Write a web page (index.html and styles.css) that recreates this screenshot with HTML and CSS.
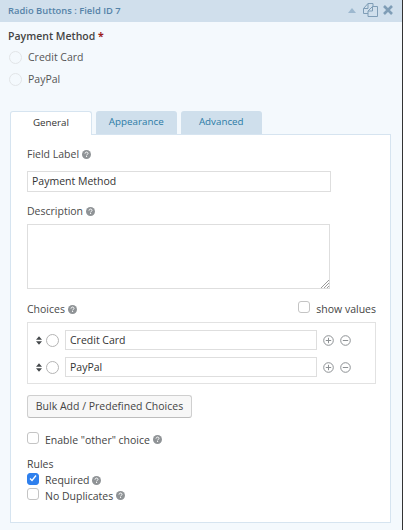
FILE: index.html
```html
<!DOCTYPE html>
<html lang="en">
<head>
    <meta charset="UTF-8">
    <meta name="viewport" content="width=device-width, initial-scale=1.0">
    <title>Radio Buttons</title>
    <link rel="stylesheet" href="styles.css">
</head>
<body>
    <svg class="sprites" width="0" height="0">
        <symbol id="help" viewBox="0 0 9 9">
            <circle cx="4.5" cy="4.5" r="4.5" fill="#8f9396"/>
            <path d="M3 3.6c0-2 3-2 3-.2 0 1-1.400 1-1.400 2" fill="none" stroke="#fff" stroke-width="1"/>
            <rect x="4.100" y="6" width="1" height="1" fill="#fff"/>
        </symbol>
        <symbol id="plus" viewBox="0 0 11 11">
            <circle cx="5.500" cy="5.500" r="4.800" fill="none" stroke="#8d9194" stroke-width="1"/>
            <path d="M2.800 5.500h5.400M5.500 2.800v5.400" stroke="#8d9194" stroke-width="1"/>
        </symbol>
        <symbol id="minus" viewBox="0 0 11 11">
            <circle cx="5.500" cy="5.500" r="4.800" fill="none" stroke="#8d9194" stroke-width="1"/>
            <path d="M2.800 5.500h5.400" stroke="#8d9194" stroke-width="1"/>
        </symbol>
        <symbol id="sort" viewBox="0 0 7 10">
            <path d="M3.500 0L7 4H0zM3.500 10L0 6h7z" fill="#44484b"/>
        </symbol>
    </svg>

    <div class="field-bar">
        <span class="field-title">Radio Buttons : Field ID 7</span>
        <div class="bar-icons">
            <svg class="collapse" width="8" height="5" viewBox="0 0 8 5"><path d="M4 0l4 5H0z" fill="#9db8cf"/></svg>
            <svg width="15" height="14" viewBox="0 0 15 14" fill="none" stroke="#7f9db6" stroke-width="1">
                <path d="M5 10.500H.5v-5L5 .5h5v3"/>
                <path d="M.5 5.500H5v-5"/>
                <path d="M5 8l4.500-4.500h5v10H5z"/>
                <path d="M5 8h4.500V3.500"/>
            </svg>
            <svg width="10" height="10" viewBox="0 0 10 10"><path d="M1 1l8 8M9 1l-8 8" stroke="#7f9db6" stroke-width="2.600"/></svg>
        </div>
    </div>

    <div class="preview">
        <div class="preview-label">Payment Method <span class="required">*</span></div>
        <div class="preview-choice"><span class="radio faint"></span>Credit Card</div>
        <div class="preview-choice"><span class="radio faint"></span>PayPal</div>
    </div>

    <div class="tabs">
        <div class="tab active">General</div>
        <div class="tab">Appearance</div>
        <div class="tab">Advanced</div>
    </div>

    <div class="panel">
        <div class="label">Field Label <svg class="help"><use href="#help"/></svg></div>
        <div class="text-box label-box">Payment Method</div>

        <div class="label desc-label">Description <svg class="help"><use href="#help"/></svg></div>
        <div class="desc-box">
            <svg class="grip" width="9" height="9" viewBox="0 0 9 9"><path d="M9 1L1 9M9 4L4 9M9 7L7 9" stroke="#9a9a9a" stroke-width="1"/></svg>
        </div>

        <div class="choices-head">
            <div class="label">Choices <svg class="help"><use href="#help"/></svg></div>
            <div class="show-values"><span class="check"></span>show values</div>
        </div>
        <div class="choices">
            <div class="choice-row">
                <svg class="sort"><use href="#sort"/></svg>
                <span class="radio"></span>
                <div class="text-box choice-box">Credit Card</div>
                <svg class="round-btn"><use href="#plus"/></svg>
                <svg class="round-btn"><use href="#minus"/></svg>
            </div>
            <div class="choice-row">
                <svg class="sort"><use href="#sort"/></svg>
                <span class="radio"></span>
                <div class="text-box choice-box">PayPal</div>
                <svg class="round-btn"><use href="#plus"/></svg>
                <svg class="round-btn"><use href="#minus"/></svg>
            </div>
        </div>

        <div class="bulk-btn">Bulk Add / Predefined Choices</div>

        <div class="option other"><span class="check"></span>Enable "other" choice <svg class="help"><use href="#help"/></svg></div>

        <div class="rules-label">Rules</div>
        <div class="option">
            <span class="check checked">
                <svg width="8" height="7" viewBox="0 0 8 7"><path d="M1 3.500l2 2 4-5" fill="none" stroke="#fff" stroke-width="1.300"/></svg>
            </span>Required <svg class="help"><use href="#help"/></svg>
        </div>
        <div class="option">
            <span class="check"></span>No Duplicates <svg class="help"><use href="#help"/></svg>
        </div>
    </div>
</body>
</html>
```

FILE: styles.css
```css
html {
    background-color: #333;
}

body {
    margin: 0;
    width: 402px;
    height: 530px;
    overflow: hidden;
    background-color: #f4f9fd;
    font-family: "Open Sans", sans-serif;
    font-size: 10.5px;
    color: #444;
}

.sprites {
    position: absolute;
}

/* Top bar */
.field-bar {
    box-sizing: border-box;
    height: 22px;
    display: flex;
    align-items: center;
    justify-content: space-between;
    padding: 0 9px 2px 8px;
    background-color: #d0dfec;
}

.field-title {
    font-size: 9.4px;
    font-weight: 600;
    color: #5583a8;
}

.bar-icons {
    display: flex;
    align-items: center;
    gap: 5px;
}

.collapse {
    margin-right: 2px;
}

/* Field preview */
.preview {
    height: 89px;
    padding-left: 8px;
}

.preview-label {
    padding-top: 6px;
    line-height: 16px;
    font-size: 10.5px;
    font-weight: 600;
    color: #444;
}

.required {
    color: #9c1c1c;
    font-weight: 700;
}

.preview-choice {
    display: flex;
    align-items: center;
    height: 22px;
    gap: 6px;
    color: #555;
}

.preview-label + .preview-choice {
    margin-top: 2px;
}

.radio {
    flex: none;
    width: 11px;
    height: 11px;
    border: 1px solid #b4b4b4;
    border-radius: 50%;
    background-color: #fff;
}

.radio.faint {
    margin-left: 1px;
    border-color: #e2e5e8;
    background-color: transparent;
}

/* Tabs */
.tabs {
    display: flex;
    gap: 3.5px;
    padding-left: 10px;
}

.tab {
    width: 81.5px;
    height: 23px;
    line-height: 22px;
    text-align: center;
    font-size: 9.8px;
    color: #2b7ba6;
    background-color: #cfdfec;
    border-radius: 3px 3px 0 0;
}

.tab.active {
    box-sizing: border-box;
    width: 82px;
    height: 24px;
    margin-bottom: -1px;
    color: #333;
    background-color: #fff;
    border: 1px solid #d6e4f0;
    border-bottom: none;
    position: relative;
}

/* Panel */
.panel {
    width: 349px;
    height: 376px;
    margin-left: 10px;
    padding: 11px 14px 0 16px;
    background-color: #fff;
    border: 1px solid #d6e4f0;
}

.label {
    line-height: 16px;
    color: #4a4a4a;
}

.help {
    width: 9px;
    height: 9px;
    vertical-align: -1px;
}

.text-box {
    box-sizing: border-box;
    border: 1px solid #dedede;
    padding: 0 4px;
    font-size: 10.5px;
    color: #333;
    background-color: #fff;
}

.label-box {
    width: 304px;
    height: 21px;
    line-height: 19px;
    margin-top: 9px;
}

.desc-label {
    margin-top: 11px;
}

.desc-box {
    box-sizing: border-box;
    position: relative;
    width: 303px;
    height: 65px;
    margin-top: 5px;
    border: 1px solid #dedede;
}

.grip {
    position: absolute;
    right: 0;
    bottom: 0;
}

.choices-head {
    display: flex;
    justify-content: space-between;
    align-items: center;
    height: 16px;
    margin-top: 12px;
}

.show-values {
    display: flex;
    align-items: center;
    gap: 6px;
}

.check {
    box-sizing: border-box;
    flex: none;
    display: inline-flex;
    align-items: center;
    justify-content: center;
    width: 12px;
    height: 12px;
    margin-right: 6px;
    border: 1px solid #c4c4c4;
    border-radius: 3px;
    background-color: #fff;
}

.show-values .check {
    margin: -4px 0 0;
}

.check.checked {
    border-color: #2f80ed;
    background-color: #2f80ed;
}

/* Choices box */
.choices {
    box-sizing: border-box;
    height: 62px;
    margin-top: 5px;
    padding: 7px 0 0 8px;
    border: 1px solid #e2e2e2;
}

.choice-row {
    display: flex;
    align-items: center;
    height: 20px;
    margin-bottom: 7px;
}

.sort {
    flex: none;
    width: 6px;
    height: 9px;
    margin-right: 4px;
}

.choice-row .radio {
    margin-right: 6px;
}

.choice-box {
    width: 252px;
    height: 20px;
    line-height: 18px;
    margin-right: 6px;
}

.round-btn {
    flex: none;
    width: 11px;
    height: 11px;
    margin-right: 6px;
}

.bulk-btn {
    box-sizing: border-box;
    width: 165px;
    height: 23px;
    line-height: 21px;
    margin-top: 11px;
    text-align: center;
    color: #444;
    background-color: #f7f7f7;
    border: 1px solid #cfcfcf;
    border-bottom-color: #bdbdbd;
    border-radius: 3px;
}

.option {
    display: flex;
    align-items: center;
    height: 15.5px;
    white-space: pre;
}

.option .check {
    margin-top: -3px;
}

.other {
    margin-top: 14px;
}

.rules-label {
    margin-top: 8px;
    line-height: 16px;
}

.rules-label + .option {
    margin-top: 1px;
}
```
